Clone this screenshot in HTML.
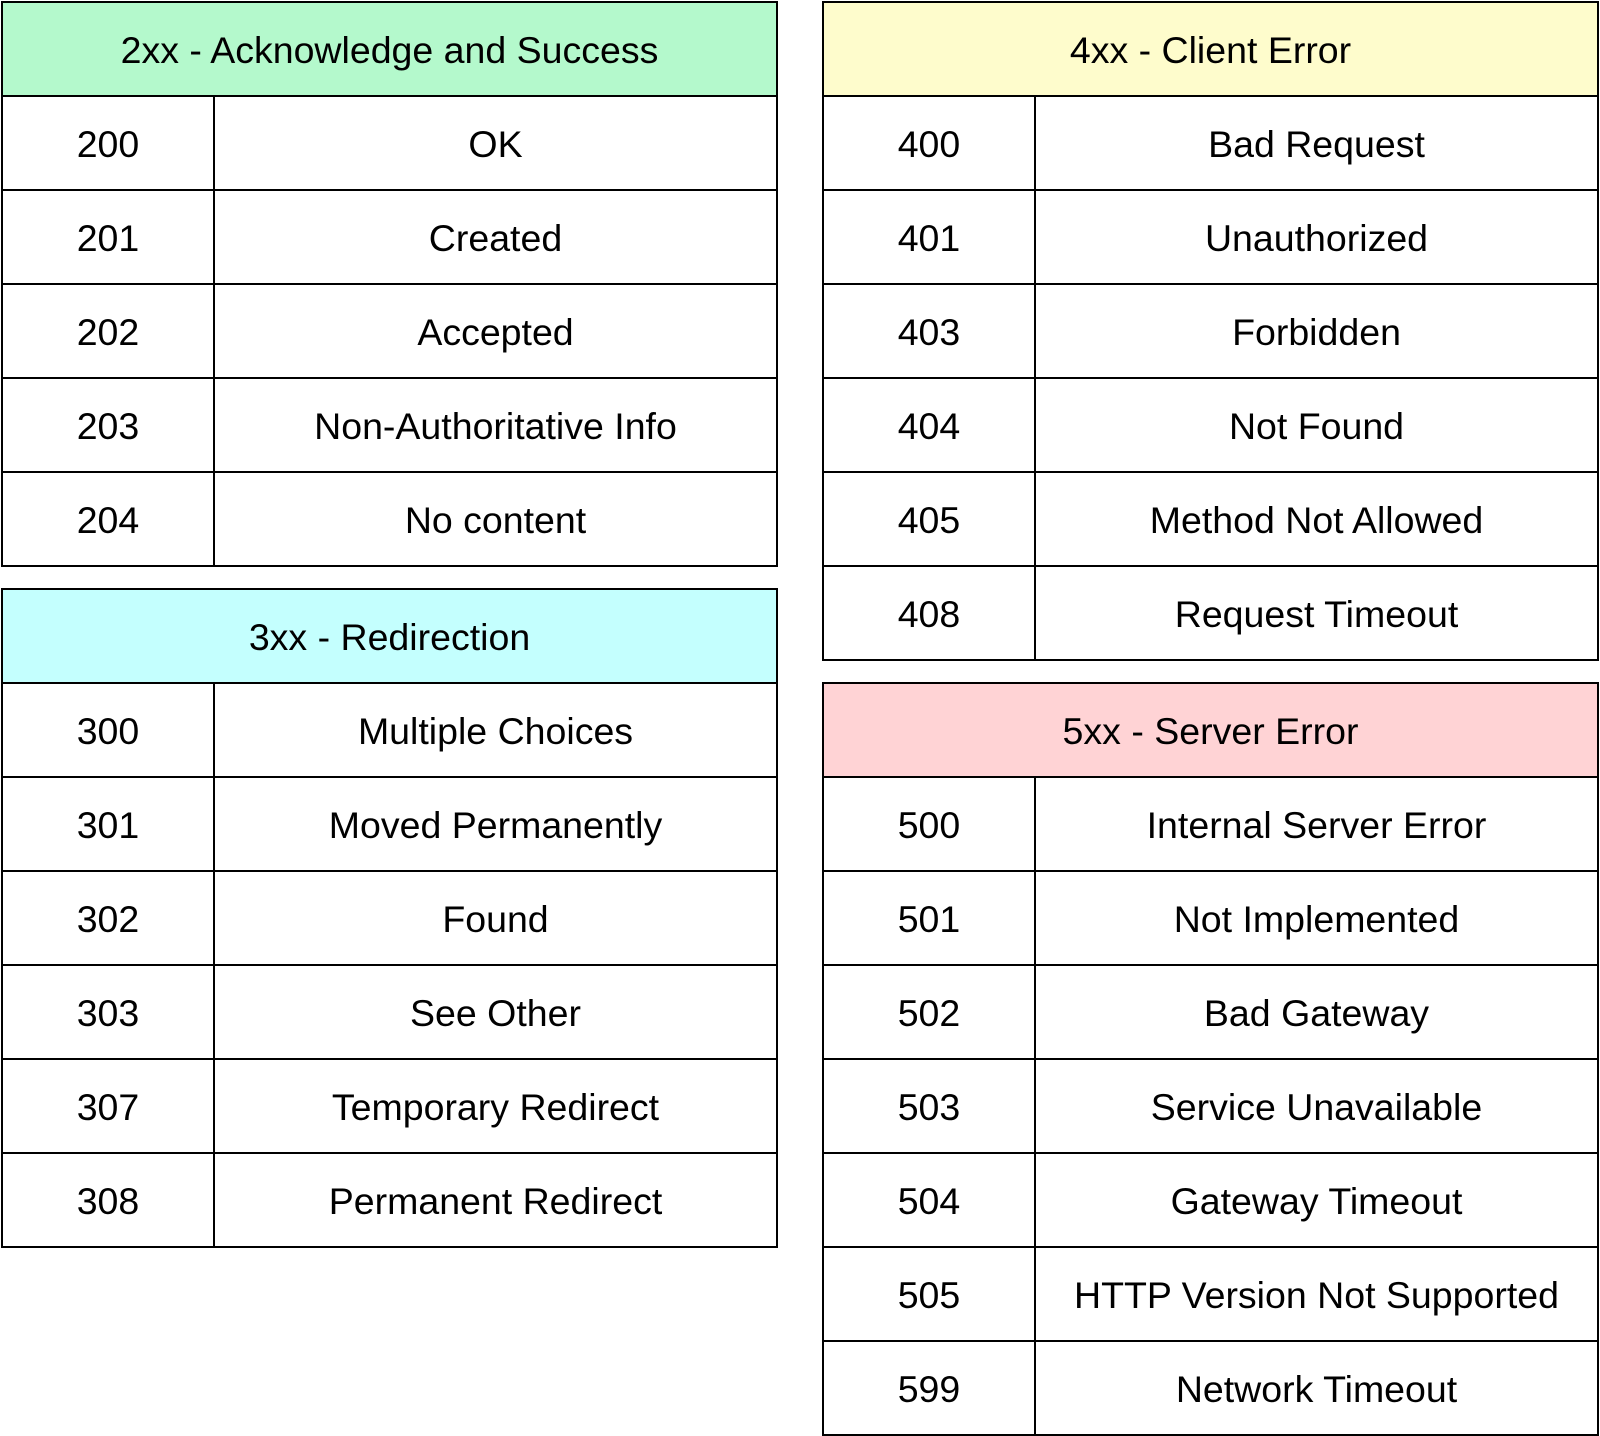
<!DOCTYPE html>
<html><head><meta charset="utf-8"><style>
body{margin:0;width:1600px;height:1436px;background:#fff;position:relative;font-family:"Liberation Sans",Arial,sans-serif;font-size:37.5px;color:#000;overflow:hidden}
.t{position:absolute}
.r{height:96px;box-sizing:border-box;border:2px solid #000;margin-top:-2px;display:flex}
.r:first-child{margin-top:0}
.h{justify-content:center;align-items:center;padding-top:3px}
.c1{box-sizing:border-box;width:212px;border-right:2px solid #000;display:flex;align-items:center;justify-content:center;padding-top:3px}
.c2{flex:1;display:flex;align-items:center;justify-content:center;padding-top:3px}
</style></head><body>

<div class="t" style="left:1px;top:1px;width:777px">
<div class="r h" style="background:#b4f9cc">2xx - Acknowledge and Success</div>
<div class="r"><div class="c1">200</div><div class="c2">OK</div></div>
<div class="r"><div class="c1">201</div><div class="c2">Created</div></div>
<div class="r"><div class="c1">202</div><div class="c2">Accepted</div></div>
<div class="r"><div class="c1">203</div><div class="c2">Non-Authoritative Info</div></div>
<div class="r"><div class="c1">204</div><div class="c2">No content</div></div>
</div>

<div class="t" style="left:1px;top:588px;width:777px">
<div class="r h" style="background:#c4fffe">3xx - Redirection</div>
<div class="r"><div class="c1">300</div><div class="c2">Multiple Choices</div></div>
<div class="r"><div class="c1">301</div><div class="c2">Moved Permanently</div></div>
<div class="r"><div class="c1">302</div><div class="c2">Found</div></div>
<div class="r"><div class="c1">303</div><div class="c2">See Other</div></div>
<div class="r"><div class="c1">307</div><div class="c2">Temporary Redirect</div></div>
<div class="r"><div class="c1">308</div><div class="c2">Permanent Redirect</div></div>
</div>

<div class="t" style="left:822px;top:1px;width:777px">
<div class="r h" style="background:#fefccc">4xx - Client Error</div>
<div class="r"><div class="c1">400</div><div class="c2">Bad Request</div></div>
<div class="r"><div class="c1">401</div><div class="c2">Unauthorized</div></div>
<div class="r"><div class="c1">403</div><div class="c2">Forbidden</div></div>
<div class="r"><div class="c1">404</div><div class="c2">Not Found</div></div>
<div class="r"><div class="c1">405</div><div class="c2">Method Not Allowed</div></div>
<div class="r"><div class="c1">408</div><div class="c2">Request Timeout</div></div>
</div>

<div class="t" style="left:822px;top:682px;width:777px">
<div class="r h" style="background:#ffd3d5">5xx - Server Error</div>
<div class="r"><div class="c1">500</div><div class="c2">Internal Server Error</div></div>
<div class="r"><div class="c1">501</div><div class="c2">Not Implemented</div></div>
<div class="r"><div class="c1">502</div><div class="c2">Bad Gateway</div></div>
<div class="r"><div class="c1">503</div><div class="c2">Service Unavailable</div></div>
<div class="r"><div class="c1">504</div><div class="c2">Gateway Timeout</div></div>
<div class="r"><div class="c1">505</div><div class="c2">HTTP Version Not Supported</div></div>
<div class="r"><div class="c1">599</div><div class="c2">Network Timeout</div></div>
</div>

</body></html>
